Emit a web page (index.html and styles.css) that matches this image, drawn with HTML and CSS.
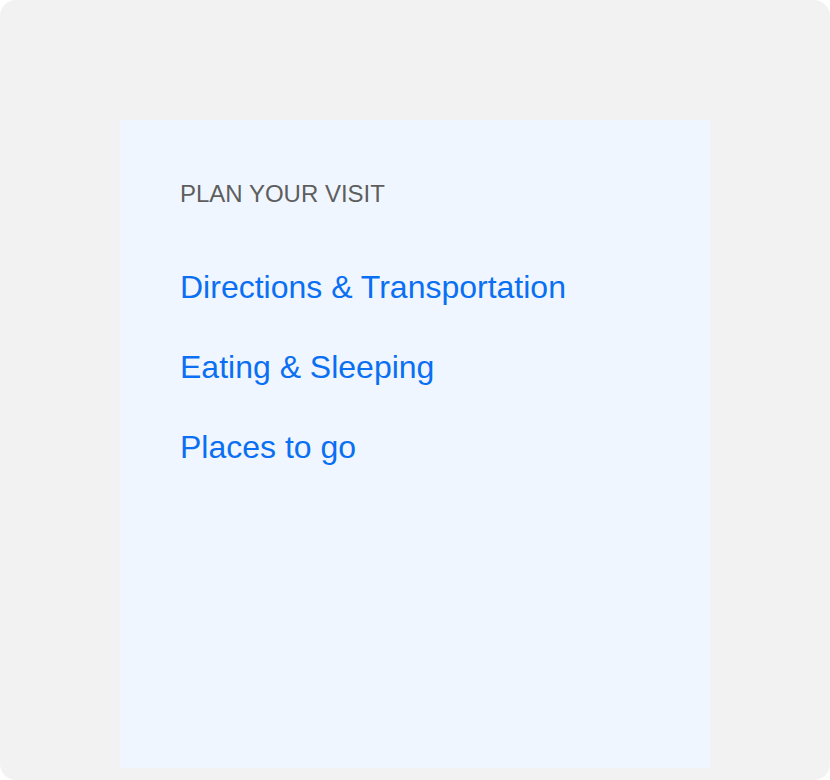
FILE: index.html
```html
<!DOCTYPE html>
<html lang="en">
<head>
  <meta charset="UTF-8">
  <meta name="viewport" content="width=device-width, initial-scale=1.0">
  <title>Plan Your Visit</title>
  <link rel="stylesheet" href="styles.css">
</head>
<body>
  <div class="frame">
    <!-- Visit panel -->
    <nav class="visit-panel">
      <h2 class="visit-title">PLAN YOUR VISIT</h2>
      <ul class="visit-links">
        <li><a href="#">Directions &amp; Transportation</a></li>
        <li><a href="#">Eating &amp; Sleeping</a></li>
        <li><a href="#">Places to go</a></li>
      </ul>
    </nav>
  </div>
</body>
</html>
```

FILE: styles.css
```css
/* General Reset */
* {
  margin: 0;
  padding: 0;
  box-sizing: border-box;
}

body {
  background-color: #ffffff;
  font-family: "Liberation Sans", Arial, sans-serif;
  width: 830px;
  height: 780px;
  overflow: hidden;
}

/* Outer frame */
.frame {
  width: 830px;
  height: 780px;
  background-color: #f2f2f2;
  border-radius: 16px;
  padding: 120px 120px 12px 120px;
  display: flex;
  flex-direction: column;
}

/* Panel */
.visit-panel {
  flex: 1;
  background-color: #f0f6ff;
  padding: 60px 60px;
}

.visit-title {
  font-size: 24px;
  font-weight: normal;
  line-height: 28px;
  color: #5e5e5e;
  margin-bottom: 59px;
}

.visit-links {
  list-style: none;
  display: flex;
  flex-direction: column;
  gap: 40px;
}

.visit-links a {
  display: block;
  font-size: 32px;
  line-height: 40px;
  color: #0a6ff2;
  text-decoration: none;
}
```
